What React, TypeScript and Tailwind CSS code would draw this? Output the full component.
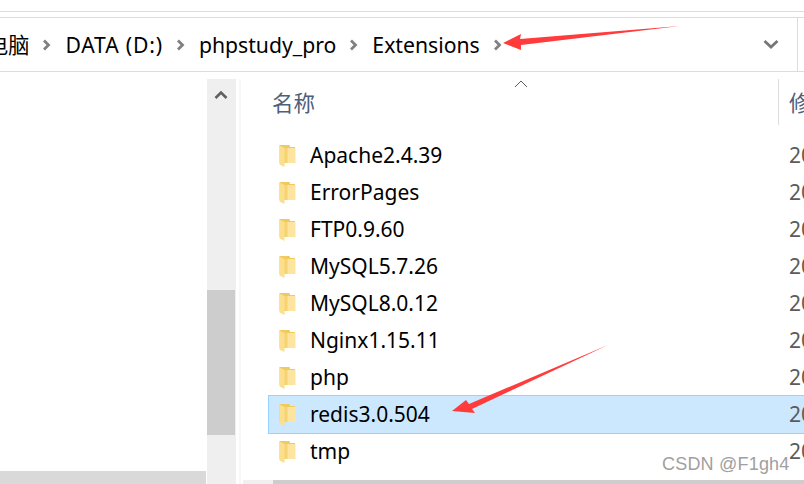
import React from "react";

const folders = ["Apache2.4.39", "ErrorPages", "FTP0.9.60", "MySQL5.7.26", "MySQL8.0.12", "Nginx1.15.11", "php", "redis3.0.504", "tmp"];

const Chevron = () => (
  <svg width="10" height="14" viewBox="0 0 10 14" className="shrink-0">
    <path d="M2 2.5 L6.5 7 L2 11.5" fill="none" stroke="#808080" strokeWidth="2.8" />
  </svg>
);

const FolderIcon = () => (
  <svg width="17" height="24" viewBox="0 0 17 24" className="shrink-0">
    <path d="M0.5 1 H10.5 L11 3 H16 V19 H5 L0.5 19 Z" fill="#f0c95f" />
    <path d="M5 4 H16.5 V19 H5 Z" fill="#fde59f" />
    <path d="M0.5 1.5 L5.5 4 V23 L0.5 20.5 Z" fill="#fbdf8c" />
    <path d="M5.5 4 H8.5 V19 H5.5 Z" fill="#f6d270" />
  </svg>
);

export default function App() {
  return (
    <div
      className="relative w-[804px] h-[484px] overflow-hidden bg-white text-black"
      style={{ fontFamily: '"Noto Sans", "Noto Sans CJK SC", sans-serif' }}
    >
      <div className="h-[12px] border-b border-[#dcdcdc]" />
      <div className="h-[5px]" />
      {/* address bar */}
      <div className="h-[55px] border-y border-[#dcdcdc] flex items-center text-[21.2px]">
        <div className="flex-1 flex items-center overflow-hidden h-full">
          <span className="ml-[-13px] mr-[13px] whitespace-nowrap">电脑</span>
          <Chevron />
          <span className="mx-[13px] whitespace-nowrap tracking-[0.8px]">DATA (D:)</span>
          <Chevron />
          <span className="mx-[13px] whitespace-nowrap">phpstudy_pro</span>
          <Chevron />
          <span className="mx-[13px] whitespace-nowrap">Extensions</span>
          <Chevron />
        </div>
        <div className="w-[60px] h-full flex items-center pl-[25px] mr-[-1px]">
          <svg width="16" height="11" viewBox="0 0 16 11">
            <path d="M1.5 2 L8 8 L14.5 2" fill="none" stroke="#777777" strokeWidth="2.8" />
          </svg>
        </div>
        <div className="w-[7px] h-full border-l border-[#dcdcdc]" />
      </div>

      <div className="flex h-[405px] mt-[7px] items-stretch">
        {/* nav pane */}
        <div className="w-[207px] flex flex-col justify-end">
          <div className="h-[13px] w-[206px] bg-[#d9d9d9]" />
        </div>
        <div className="w-[29px] bg-[#efefef] flex flex-col">
          <div className="h-[211px] pt-[11px] pl-[7px]">
            <svg width="14" height="10" viewBox="0 0 14 10">
              <path d="M1.5 8 L7 2.5 L12.5 8" fill="none" stroke="#606060" strokeWidth="2.6" />
            </svg>
          </div>
          <div className="h-[145px] bg-[#cdcdcd] mr-[1px]" />
        </div>
        <div className="w-[3px]" />
        <div className="w-[2px] bg-[#f7f7f7]" />

        {/* file list */}
        <div className="flex-1 flex flex-col min-w-0 relative">
          <div className="h-[46px] flex items-center pt-[2px] ml-[31px] text-[21.5px] text-[#4c607a] relative">
            <span>名称</span>
            <svg width="14" height="8" viewBox="0 0 14 8" className="absolute left-[242px] top-[1px]">
              <path d="M1 7 L7 1 L13 7" fill="none" stroke="#606060" strokeWidth="1" />
            </svg>
            <div className="absolute left-[506px] top-0 h-[46px] w-px bg-[#dcdcdc]" />
            <span className="absolute left-[517px] top-[8px] whitespace-nowrap">修改日期</span>
          </div>
          <div className="mt-[12px] ml-[27px] flex flex-col text-[21px]">
            {folders.map((name) => {
              const selected = name.startsWith("redis");
              return (
                <div
                  key={name}
                  className={`flex items-center whitespace-nowrap overflow-hidden border-l border-y ${
                    selected ? "h-[39px] my-[-1px] bg-[#cce8ff] border-[#99d1ff]" : "h-[37px] border-transparent"
                  }`}
                >
                  <span className="ml-[10px] mr-[14px] flex">
                    <FolderIcon />
                  </span>
                  <span className="w-[479px] shrink-0">{name}</span>
                  <span className="text-[#5b5b5b]">2019</span>
                </div>
              );
            })}
          </div>
          <div className="absolute bottom-0 left-[2px] right-0 h-[4px] flex">
            <div className="w-[30px] bg-[#f0f0f0]" />
            <div className="flex-1 bg-[#cdcdcd]" />
          </div>
        </div>
      </div>

      {/* annotation arrows */}
      <svg width="804" height="484" viewBox="0 0 804 484" className="absolute left-0 top-0 pointer-events-none">
        <path d="M503 43 L521 34 L520 39 L680 26 L521 45 L521 50 Z" fill="#ff3b3b" />
        <path d="M452 411 L466 400 L469 404 L608 345 L472 409 L475 413 Z" fill="#ff3b3b" />
      </svg>

      {/* watermark */}
      <div
        className="absolute left-[662px] top-[453px] text-[18px] leading-[22px] tracking-[0.2px] text-[#a0a0a0] whitespace-nowrap"
        style={{ fontFamily: '"Liberation Sans", sans-serif' }}
      >
        CSDN @F1gh4
      </div>
    </div>
  );
}
